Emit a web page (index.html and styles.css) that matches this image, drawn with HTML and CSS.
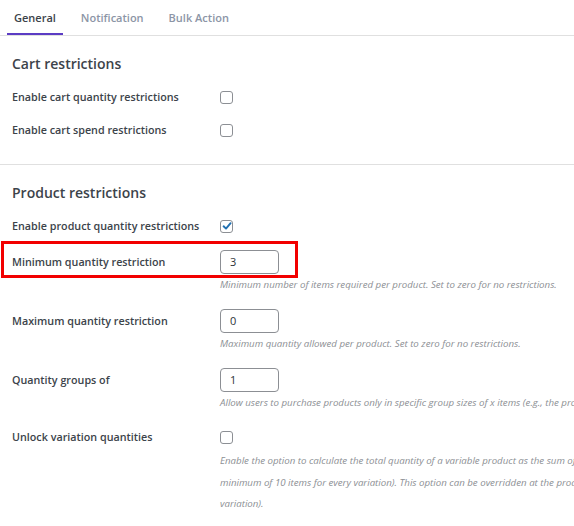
FILE: index.html
```html
<!DOCTYPE html>
<html>
<head>
<meta charset="utf-8">
<link rel="stylesheet" href="styles.css">
</head>
<body>
<div class="page">
  <nav class="tabs">
    <a class="tab active">General</a>
    <a class="tab">Notification</a>
    <a class="tab">Bulk Action</a>
  </nav>

  <section class="section">
    <h2 class="heading">Cart restrictions</h2>
    <div class="row">
      <div class="label">Enable cart quantity restrictions</div>
      <div class="field"><span class="checkbox"></span></div>
    </div>
    <div class="row">
      <div class="label">Enable cart spend restrictions</div>
      <div class="field"><span class="checkbox"></span></div>
    </div>
  </section>

  <section class="section">
    <h2 class="heading">Product restrictions</h2>
    <div class="row">
      <div class="label">Enable product quantity restrictions</div>
      <div class="field"><span class="checkbox"><svg viewBox="0 0 12 12" width="12" height="12"><path d="M2.6 6.3 L5 8.6 L9.6 3.2" fill="none" stroke="#2271b1" stroke-width="1.9" stroke-linecap="round" stroke-linejoin="round"/></svg></span></div>
    </div>
    <div class="row-input highlighted">
      <div class="label">Minimum quantity restriction</div>
      <div class="field"><span class="input">3</span></div>
    </div>
    <p class="desc">Minimum number of items required per product. Set to zero for no restrictions.</p>
    <div class="row-input">
      <div class="label">Maximum quantity restriction</div>
      <div class="field"><span class="input">0</span></div>
    </div>
    <p class="desc">Maximum quantity allowed per product. Set to zero for no restrictions.</p>
    <div class="row-input">
      <div class="label">Quantity groups of</div>
      <div class="field"><span class="input">1</span></div>
    </div>
    <p class="desc">Allow users to purchase products only in specific group sizes of x items (e.g., the product can be bought in groups of 5, 10, 15 etc.).</p>
    <div class="row-input row-check">
      <div class="label">Unlock variation quantities</div>
      <div class="field"><span class="checkbox"></span></div>
    </div>
    <p class="desc multi">Enable the option to calculate the total quantity of a variable product as the sum of all its variations (e.g., a customer must buy a<br>minimum of 10 items for every variation). This option can be overridden at the product level (variable product and single<br>variation).</p>
  </section>
</div>
</body>
</html>
```

FILE: styles.css
```css
html, body {
  margin: 0;
  padding: 0;
  background: #fff;
  overflow: hidden;
}
body {
  font-family: "Open Sans", "Noto Sans", sans-serif;
  color: #3c434a;
  width: 574px;
  height: 526px;
}
.page {
  width: 574px;
}
.tabs {
  display: flex;
  padding-left: 7px;
  border-bottom: 1px solid #e0e0e0;
  height: 36px;
  box-sizing: border-box;
}
.tab {
  font-size: 11px;
  line-height: 15px;
  color: #8c95a6;
  padding: 10px 7px 0;
  margin-right: 11px;
  box-sizing: border-box;
  height: 35px;
  font-weight: 600;
}
.tab.active {
  color: #3c434a;
  border-bottom: 2px solid #5b3cc4;
}
.section {
  padding: 0 0 0 12px;
}
.section + .section {
  border-top: 1px solid #e0e0e0;
  margin-top: 17px;
}
.heading {
  font-size: 14px;
  font-weight: 600;
  color: #3c434a;
  margin: 18px 0 7px;
  line-height: 20px;
}
.row {
  display: flex;
  align-items: center;
  height: 33px;
}
.label {
  width: 208px;
  flex: none;
  font-size: 10.75px;
  line-height: 15px;
  font-weight: 600;
  color: #3c434a;
}
.checkbox {
  display: block;
  width: 11px;
  height: 11px;
  border: 1px solid #8c8f94;
  border-radius: 3px;
  position: relative;
}
.checkbox svg {
  position: absolute;
  left: 0;
  top: -1px;
}
.row-input {
  display: flex;
  align-items: center;
  padding-top: 13px;
  position: relative;
}
.row-input.highlighted {
  padding-top: 7px;
}
.row-check {
  padding-top: 12px;
}
.row-check .field {
  height: 22px;
  display: flex;
  align-items: center;
}
.input {
  display: block;
  box-sizing: border-box;
  width: 59px;
  height: 24px;
  border: 1px solid #8c8f94;
  border-radius: 4px;
  font-size: 11px;
  line-height: 22px;
  padding-left: 9px;
  color: #2c3338;
  font-weight: 500;
}
.highlighted::before {
  content: "";
  position: absolute;
  left: -11px;
  top: -2px;
  width: 297px;
  height: 37px;
  box-sizing: border-box;
  border: 3px solid #f20000;
  pointer-events: none;
}
.desc {
  margin: 0 0 0 208px;
  font-size: 9.7px;
  font-style: italic;
  color: #8c8f94;
  white-space: nowrap;
  line-height: 22px;
}
.desc.multi {
  line-height: 21.5px;
  padding-top: 2px;
}
```
